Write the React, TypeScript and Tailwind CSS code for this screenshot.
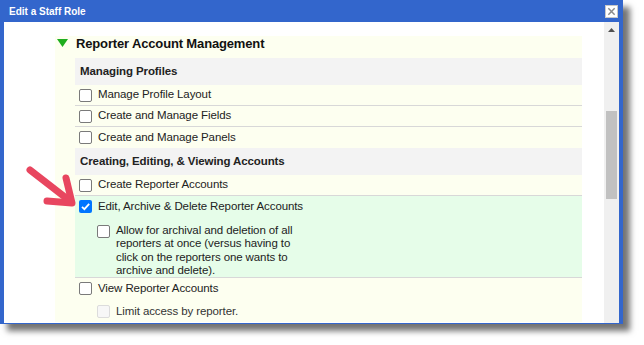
import React from "react";

type Item = {
  label: string;
  checked?: boolean;
  disabled?: boolean;
  nested?: boolean;
  border?: boolean;
};

function Box({ checked, disabled }: { checked?: boolean; disabled?: boolean }) {
  if (checked) {
    return (
      <span className="flex h-[13px] w-[13px] shrink-0 items-center justify-center rounded-[2px] bg-[#0075ff]">
        <svg viewBox="0 0 13 13" className="h-[13px] w-[13px]">
          <path d="M3 6.8 L5.4 9.2 L10.2 3.8" fill="none" stroke="#fff" strokeWidth="1.8" />
        </svg>
      </span>
    );
  }
  return (
    <span
      className={
        disabled
          ? "block h-[13px] w-[13px] shrink-0 rounded-[2px] border border-[#dcdcdc] bg-[#f7f7f7]"
          : "block h-[13px] w-[13px] shrink-0 rounded-[2px] border border-[#7a7a7a] bg-white"
      }
    />
  );
}

function Row({ label, checked, disabled, nested, border }: Item) {
  return (
    <div
      className={`flex h-[21px] items-center gap-[6px] ${nested ? "pl-[22px]" : "pl-[4px]"} ${
        border ? "border-b border-[#d8d8d8]" : ""
      }`}
    >
      <Box checked={checked} disabled={disabled} />
      <span className={disabled ? "text-[#333]" : "text-[#222]"}>{label}</span>
    </div>
  );
}

function Heading({ children }: { children: React.ReactNode }) {
  return (
    <div className="flex h-[27px] items-center bg-[#f3f3f3] pl-[5px] font-bold text-[#222]">
      {children}
    </div>
  );
}

export default function App() {
  return (
    <div className="h-[345px] w-[644px] bg-white" style={{ fontFamily: '"Liberation Sans", Arial, sans-serif' }}>
      <div className="flex h-[324px] w-[623px] flex-col bg-[#3366cc] shadow-[7px_7px_6px_rgba(0,0,0,0.55)]">
        {/* title bar */}
        <div className="flex h-[22px] shrink-0 items-center justify-between pl-[9px] pr-[5px]">
          <span className="text-[10px] font-bold text-white">Edit a Staff Role</span>
          <span className="flex h-[13px] w-[13px] items-center justify-center border border-[#c8c8c8] bg-white">
            <svg viewBox="0 0 10 10" className="h-[9px] w-[9px]">
              <path d="M1.5 1.5 L8.5 8.5 M8.5 1.5 L1.5 8.5" stroke="#8a8a8a" strokeWidth="1.6" />
            </svg>
          </span>
        </div>

        <div className="mx-[4px] flex min-h-0 flex-1 overflow-hidden">
          {/* content */}
          <div className="relative flex-1 bg-white pl-[51px] pr-[22px] pt-[14px] text-[11.5px] leading-[13.3px] tracking-[-0.1px]">
            <div className="bg-[#fdfff0]">
              <div className="flex h-[22px] items-start gap-[8px] pl-[2px]">
                <svg viewBox="0 0 11 8" className="mt-[3px] h-[8px] w-[11px]">
                  <path d="M0 0 H11 L5.5 8 Z" fill="#1fae1f" />
                </svg>
                <span className="text-[13px] font-bold leading-[16px] tracking-[-0.15px] text-[#111]">
                  Reporter Account Management
                </span>
              </div>

              <div className="ml-[20px]">
                <Heading>Managing Profiles</Heading>
                <Row label="Manage Profile Layout" border />
                <Row label="Create and Manage Fields" border />
                <Row label="Create and Manage Panels" />
                <Heading>Creating, Editing, &amp; Viewing Accounts</Heading>
                <Row label="Create Reporter Accounts" border />
                <div className="h-[82px] border-b border-[#d8d8d8] bg-[#e6fde9]">
                  <Row label="Edit, Archive & Delete Reporter Accounts" checked />
                  <div className="flex gap-[6px] pl-[22px] pt-[7px]">
                    <span className="mt-[1px] flex shrink-0">
                      <Box />
                    </span>
                    <span className="w-[190px] text-[#222]">
                      Allow for archival and deletion of all reporters at once (versus having to click on
                      the reporters one wants to archive and delete).
                    </span>
                  </div>
                </div>
                <Row label="View Reporter Accounts" />
                <div className="h-[2px]" />
                <Row label="Limit access by reporter." disabled nested />
              </div>
            </div>

            {/* pointer arrow */}
            <svg className="absolute left-[-4px] top-[138px] h-[80px] w-[80px]" viewBox="0 0 80 80">
              <g fill="none" stroke="#e8465f" strokeWidth="7" strokeLinecap="round" strokeLinejoin="round">
                <path d="M30 10 L70 41" />
                <path d="M47 41 L72 43 L66 18" />
              </g>
            </svg>
          </div>

          {/* scrollbar */}
          <div className="flex w-[15px] shrink-0 flex-col items-center bg-[#f0f0f0]">
            <svg viewBox="0 0 7 4" className="mt-[6px] h-[4px] w-[7px]">
              <path d="M0 4 L3.5 0 L7 4 Z" fill="#505050" />
            </svg>
            <div className="mt-[79px] h-[88px] w-[11px] bg-[#c1c1c1]" />
          </div>
        </div>
        <div className="h-[1px] shrink-0" />
      </div>
    </div>
  );
}
